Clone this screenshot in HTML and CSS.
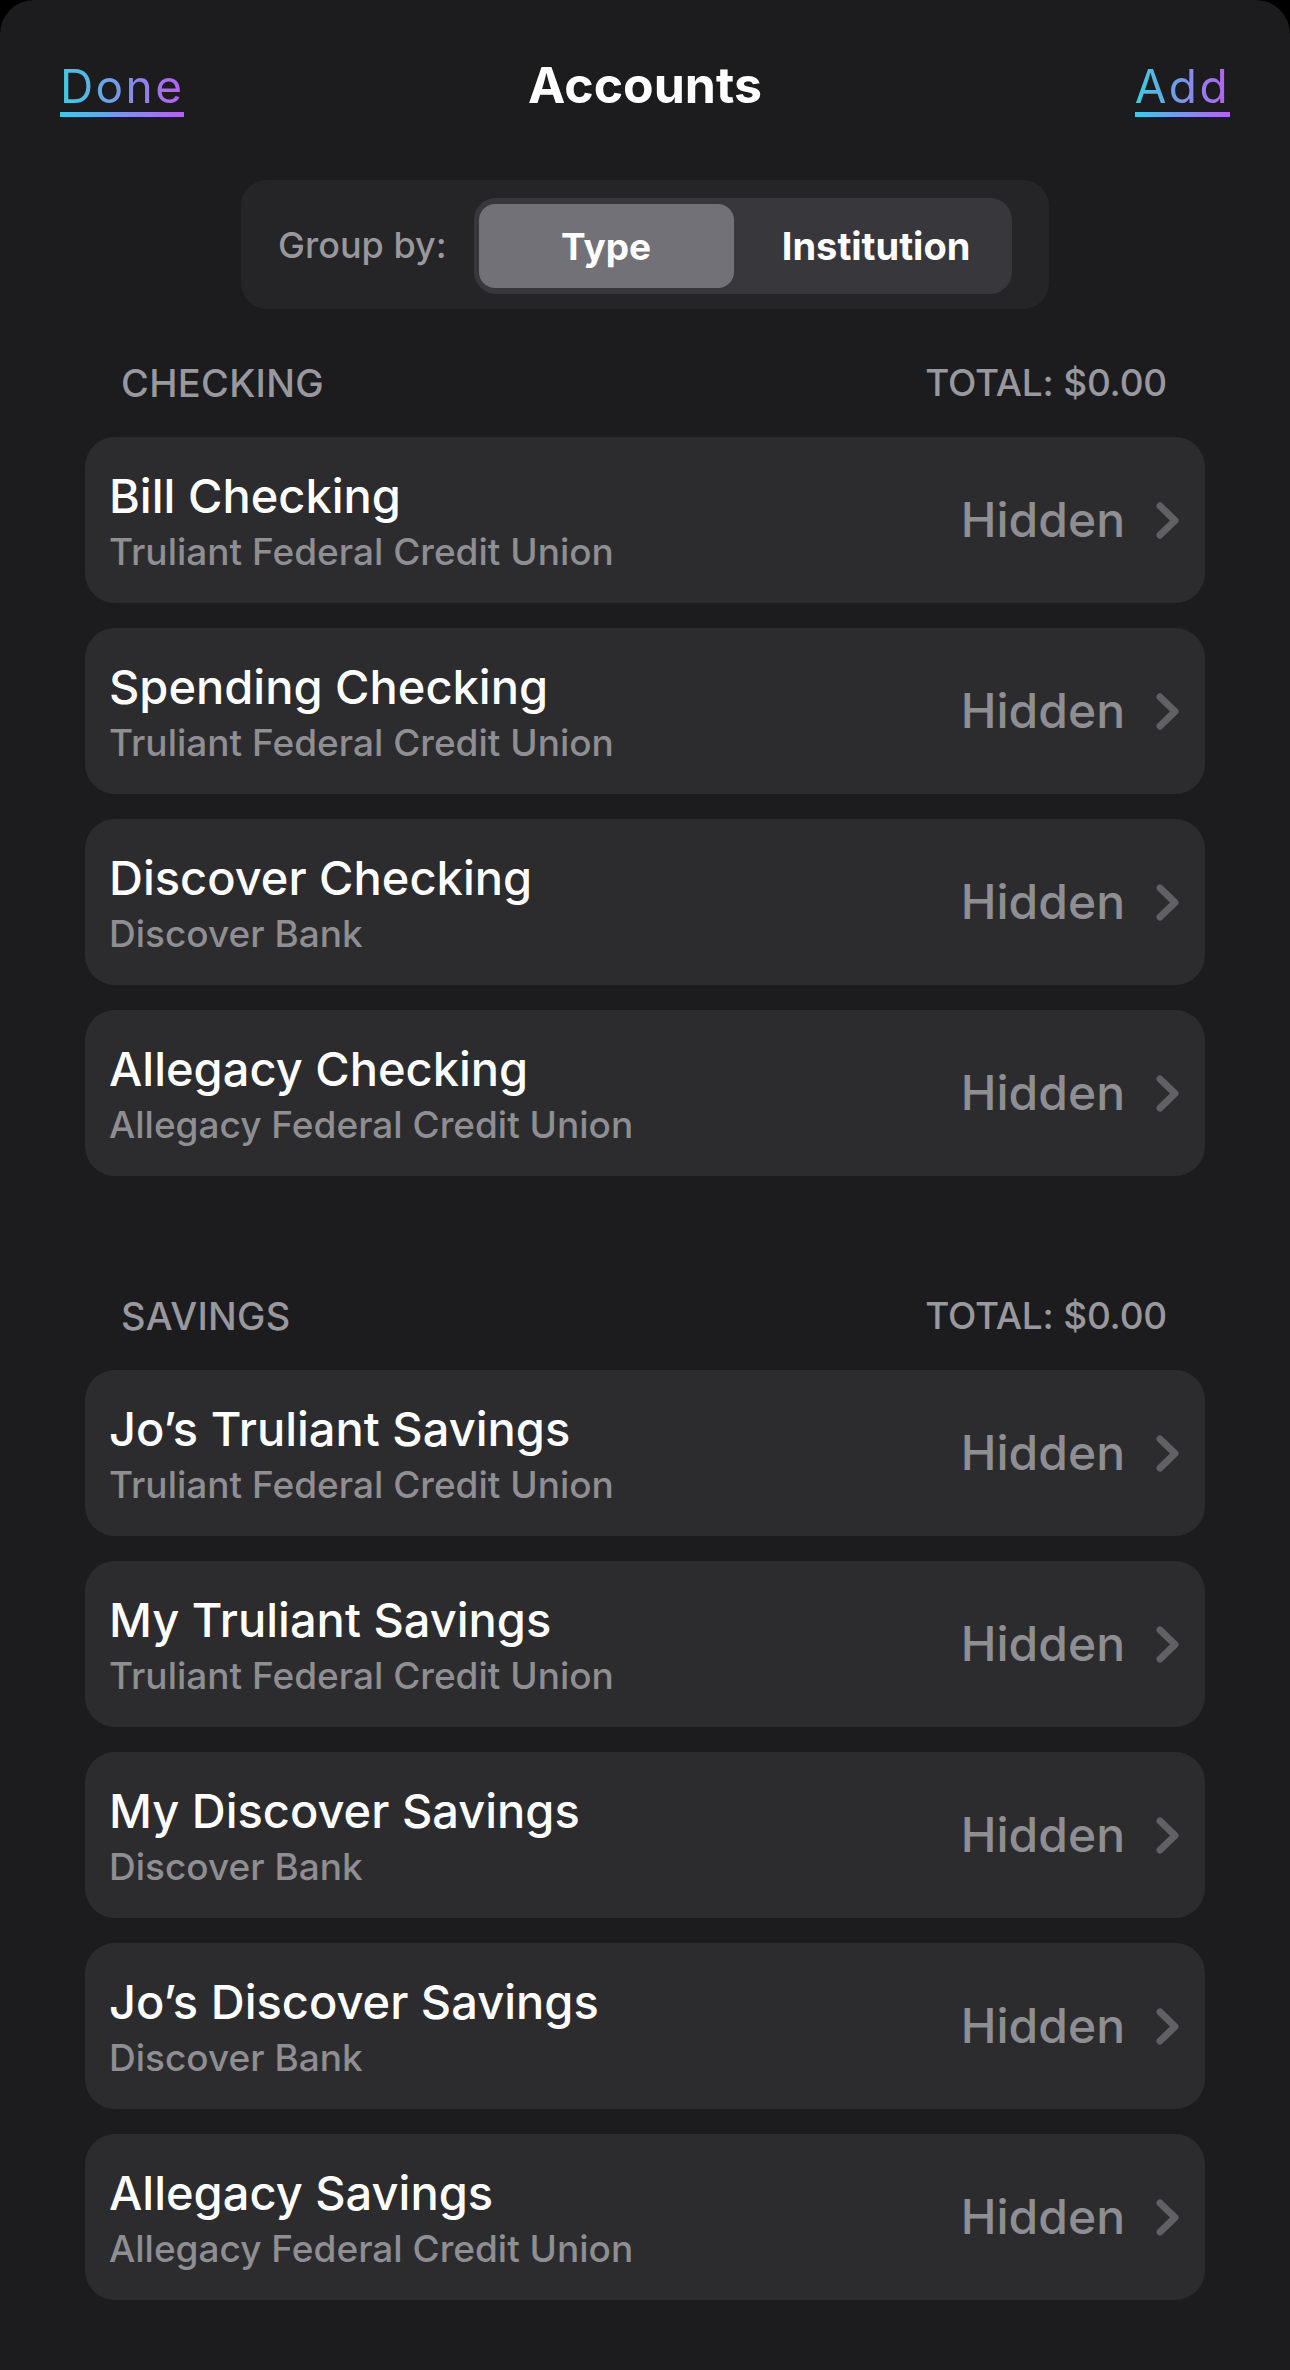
FILE: index.html
```html
<!DOCTYPE html>
<html lang="en">
<head>
<meta charset="utf-8">
<title>Accounts</title>
<link rel="stylesheet" href="styles.css">
</head>
<body>
<div class="sheet">
  <header class="nav">
    <a class="nav-link nav-left"><span class="grad-text">Done</span></a>
    <h1 class="nav-title">Accounts</h1>
    <a class="nav-link nav-right"><span class="grad-text">Add</span></a>
  </header>

  <div class="group-bar">
    <span class="group-label">Group by:</span>
    <div class="segmented">
      <span class="segment segment-active">Type</span>
      <span class="segment segment-wide">Institution</span>
    </div>
  </div>

  <section class="section">
    <div class="section-head"><span>CHECKING</span><span class="total">TOTAL: $0.00</span></div>
    <div class="cards">
      <div class="card"><div class="card-text"><div class="card-title">Bill Checking</div><div class="card-sub">Truliant Federal Credit Union</div></div><div class="card-status">Hidden<svg class="chev" viewBox="0 0 24 37"><path d="M4 4 L19 18.5 L4 33"/></svg></div></div>
      <div class="card"><div class="card-text"><div class="card-title">Spending Checking</div><div class="card-sub">Truliant Federal Credit Union</div></div><div class="card-status">Hidden<svg class="chev" viewBox="0 0 24 37"><path d="M4 4 L19 18.5 L4 33"/></svg></div></div>
      <div class="card"><div class="card-text"><div class="card-title">Discover Checking</div><div class="card-sub">Discover Bank</div></div><div class="card-status">Hidden<svg class="chev" viewBox="0 0 24 37"><path d="M4 4 L19 18.5 L4 33"/></svg></div></div>
      <div class="card"><div class="card-text"><div class="card-title">Allegacy Checking</div><div class="card-sub">Allegacy Federal Credit Union</div></div><div class="card-status">Hidden<svg class="chev" viewBox="0 0 24 37"><path d="M4 4 L19 18.5 L4 33"/></svg></div></div>
    </div>
  </section>

  <section class="section section-next">
    <div class="section-head"><span>SAVINGS</span><span class="total">TOTAL: $0.00</span></div>
    <div class="cards">
      <div class="card"><div class="card-text"><div class="card-title">Jo’s Truliant Savings</div><div class="card-sub">Truliant Federal Credit Union</div></div><div class="card-status">Hidden<svg class="chev" viewBox="0 0 24 37"><path d="M4 4 L19 18.5 L4 33"/></svg></div></div>
      <div class="card"><div class="card-text"><div class="card-title">My Truliant Savings</div><div class="card-sub">Truliant Federal Credit Union</div></div><div class="card-status">Hidden<svg class="chev" viewBox="0 0 24 37"><path d="M4 4 L19 18.5 L4 33"/></svg></div></div>
      <div class="card"><div class="card-text"><div class="card-title">My Discover Savings</div><div class="card-sub">Discover Bank</div></div><div class="card-status">Hidden<svg class="chev" viewBox="0 0 24 37"><path d="M4 4 L19 18.5 L4 33"/></svg></div></div>
      <div class="card"><div class="card-text"><div class="card-title">Jo’s Discover Savings</div><div class="card-sub">Discover Bank</div></div><div class="card-status">Hidden<svg class="chev" viewBox="0 0 24 37"><path d="M4 4 L19 18.5 L4 33"/></svg></div></div>
      <div class="card"><div class="card-text"><div class="card-title">Allegacy Savings</div><div class="card-sub">Allegacy Federal Credit Union</div></div><div class="card-status">Hidden<svg class="chev" viewBox="0 0 24 37"><path d="M4 4 L19 18.5 L4 33"/></svg></div></div>
    </div>
  </section>
</div>
</body>
</html>
```

FILE: styles.css
```css
* { box-sizing: border-box; }

html, body {
  margin: 0;
  padding: 0;
  background: #000;
}

body {
  font-family: Inter, "Noto Sans", "Liberation Sans", sans-serif;
  color: #fff;
}

.sheet {
  background: #1c1c1e;
  min-height: 2370px;
  border-radius: 34px 34px 0 0;
  overflow: hidden;
}

/* top navigation */
.nav {
  height: 180px;
  padding: 60px 60px 0;
  display: grid;
  grid-template-columns: 1fr auto 1fr;
  align-items: baseline;
}

.nav-link {
  display: inline-block;
  font-size: 46px;
  line-height: 46px;
  padding-bottom: 3px;
  border-bottom: 5px solid #3ccde0;
  border-image: linear-gradient(90deg, #3ccde0, #b95ef0) 1;
  letter-spacing: 2.4px;
}

.nav-left { justify-self: start; }
.nav-right { justify-self: end; }

.grad-text {
  background: linear-gradient(90deg, #3ccde0, #b95ef0);
  -webkit-background-clip: text;
  background-clip: text;
  color: transparent;
}

.nav-title {
  margin: 0;
  font-size: 50px;
  line-height: 50px;
  font-weight: 700;
  letter-spacing: 0;
}

/* group-by control */
.group-bar {
  width: 808px;
  height: 129px;
  margin: 0 auto;
  background: #252527;
  border-radius: 26px;
  display: flex;
  align-items: center;
  padding-left: 37px;
}

.group-label {
  font-size: 36px;
  font-weight: 500;
  color: #98989e;
  margin-right: 27px;
}

.segmented {
  width: 538px;
  height: 96px;
  margin-top: 3px;
  background: #38373c;
  border-radius: 22px;
  padding: 6px 5px;
  display: flex;
}

.segment {
  display: flex;
  align-items: center;
  justify-content: center;
  font-size: 37px;
  font-weight: 700;
  color: #fff;
}

.segment-active {
  width: 255px;
  background: #727177;
  border-radius: 16px;
}

.segment-wide {
  flex: 1;
  padding-left: 12px;
  font-size: 38px;
}

/* sections */
.section { padding: 51px 85px 0; }
.section-next { padding-top: 117px; }

.section-head {
  display: flex;
  justify-content: space-between;
  padding: 0 38px 0 36px;
  font-size: 38px;
  line-height: 46px;
  font-weight: 450;
  letter-spacing: 0.3px;
  color: #98989e;
  margin-bottom: 31px;
}

.total {
  font-size: 37px;
  letter-spacing: -0.2px;
}

.cards {
  display: flex;
  flex-direction: column;
  gap: 25px;
}

.card {
  height: 166px;
  background: #2c2c2e;
  border-radius: 30px;
  display: flex;
  align-items: center;
  justify-content: space-between;
  padding: 0 25px 0 24px;
}

.card-text {
  align-self: flex-start;
  padding-top: 33px;
}

.card-title {
  font-size: 47px;
  line-height: 52px;
  font-weight: 500;
  color: #fff;
}

.card-sub {
  margin-top: 8px;
  font-size: 37px;
  line-height: 44px;
  font-weight: 500;
  color: #8e8e93;
}

.card-status {
  display: flex;
  align-items: center;
  font-size: 48px;
  line-height: 48px;
  font-weight: 500;
  color: #8e8e93;
}

.chev {
  width: 24px;
  height: 37px;
  margin-left: 31px;
  fill: none;
  stroke: #616165;
  stroke-width: 7;
  stroke-linecap: round;
  stroke-linejoin: round;
}
```
